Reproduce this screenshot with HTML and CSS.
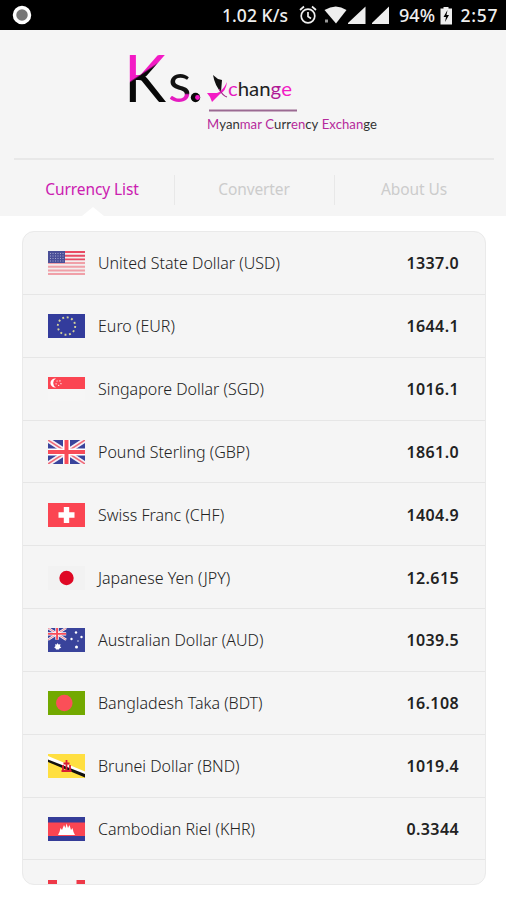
FILE: index.html
```html
<!DOCTYPE html>
<html>
<head>
<meta charset="utf-8">
<title>Ks. Xchange</title>
<meta name="viewport" content="width=device-width, initial-scale=1">
<link rel="stylesheet" href="styles.css">
</head>
<body>
  <div class="statusbar">
    <svg class="record" width="20" height="20" viewBox="0 0 20 20"><circle cx="10" cy="10" r="7.5" fill="#777" stroke="#fff" stroke-width="3.5"/></svg>
    <svg class="status" width="280" height="30" viewBox="0 0 280 30" fill="#eee">
      <text x="-4" y="22" textLength="66">1.02 K/s</text>
      <g fill="none" stroke="#eee" stroke-width="1.7">
        <circle cx="82" cy="16" r="6.8"/>
        <path d="M82 12v4.5l3 2M74 10l4-3.5M90 10l-4-3.5"/>
      </g>
      <path d="M98.500 10q11.500-7 22 0L110 23.500z"/>
      <path d="M99 19.500h3v3h-3z" fill="#999"/>
      <path d="M122 24V23L139.500 6.500V24z"/>
      <path d="M146 24V23L163 6.500V24z"/>
      <text x="173" y="22" textLength="36" lengthAdjust="spacingAndGlyphs">94%</text>
      <path d="M214.500 8.500h3v-1.500h5v1.500h3.500v16h-11.500z"/>
      <path d="M221.500 10l-4 7h2.500l-1 5 4-7h-2.500z" fill="#000"/>
      <text x="234.500" y="22" textLength="37">2:57</text>
    </svg>
  </div>

  <header class="header">
    <svg class="logo" width="290" height="128" viewBox="0 0 290 128">
      <defs>
        <linearGradient id="k" gradientUnits="userSpaceOnUse" x1="14" y1="34" x2="34" y2="64">
          <stop offset=".48" stop-color="#f31bc5"/>
          <stop offset=".53" stop-color="#080808"/>
        </linearGradient>
        <linearGradient id="s" gradientUnits="userSpaceOnUse" x1="58" y1="40" x2="58" y2="80">
          <stop offset=".58" stop-color="#111"/>
          <stop offset=".62" stop-color="#e51bc0"/>
        </linearGradient>
      </defs>
      <text class="big" x="14" y="72" font-size="65" fill="url(#k)" textLength="42" lengthAdjust="spacingAndGlyphs">K</text>
      <text class="big" x="58" y="72" font-size="54" fill="url(#s)">s</text>
      <circle cx="85.500" cy="67.500" r="4.700" fill="#080808"/>
      <circle cx="87.500" cy="67.500" r="2.400" fill="#f31bc5"/>
      <path d="M103 45l5 4 4 1-1 12q-6-6-8-17z" fill="#111"/>
      <path d="M97 63l10 0q6-2 10-11-1 9-7 12l-8 8-2-5z" fill="#f31bc5"/>
      <path d="M109 59q4 7 8 8" fill="none" stroke="#a02888" stroke-width="1.200"/>
      <text class="word" x="118" y="66" font-size="20" textLength="64" lengthAdjust="spacingAndGlyphs"><tspan fill="#e51bc0">c</tspan><tspan fill="#222">han</tspan><tspan fill="#b01895">g</tspan><tspan fill="#f31bc5">e</tspan></text>
      <path d="M99 80.500h88" stroke="#9b6a92" stroke-width="2"/>
      <text class="word" x="97" y="99" font-size="14" textLength="170" lengthAdjust="spacingAndGlyphs"><tspan fill="#b52a9b">M</tspan><tspan fill="#333">yan</tspan><tspan fill="#b52a9b">mar C</tspan><tspan fill="#333">urr</tspan><tspan fill="#b52a9b">en</tspan><tspan fill="#333">cy </tspan><tspan fill="#b52a9b">Exchan</tspan><tspan fill="#333">ge</tspan></text>
    </svg>
    <nav class="tabs">
      <div class="tab active">Currency List</div>
      <div class="tab">Converter</div>
      <div class="tab">About Us</div>
    </nav>
  </header>

  <div class="list">
    <div class="row">
      <svg class="flag" viewBox="0 0 37 24">
        <path fill="#f3eeee" d="M0 0h37v24H0z"/>
        <path d="M0 1h37M0 4.700h37M0 8.400h37" stroke="#e84a63" stroke-width="1.850"/>
        <path d="M0 12.100h37M0 15.800h37M0 19.500h37M0 23.100h37" stroke="#f0a0a8" stroke-width="2"/>
        <path fill="#4a4f98" d="M0 0h17v12H0z"/>
        <path d="M2 2.500h14M2 5h14M2 7.500h14M2 10h14" stroke="#a5a8d0" stroke-dasharray="1 1.500"/>
      </svg>
      <span class="name">United State Dollar (USD)</span><span class="rate">1337.0</span>
    </div>
    <div class="row">
      <svg class="flag" viewBox="0 0 37 24">
        <path fill="#333c9c" d="M0 0h37v24H0z"/>
        <circle cx="18.500" cy="12" r="8.700" fill="none" stroke="#d5d39a" stroke-width="1.900" stroke-dasharray="1.900 2.655"/>
      </svg>
      <span class="name">Euro (EUR)</span><span class="rate">1644.1</span>
    </div>
    <div class="row">
      <svg class="flag" viewBox="0 0 37 24">
        <path fill="#f6f6f6" d="M0 12h37v12H0z"/>
        <path fill="#fb4552" d="M0 0h37v12H0z"/>
        <path d="M8 1.500a4.600 4.600 0 1 0 0 9 5 5 0 0 1 0-9z" fill="#fff"/>
        <circle cx="10.500" cy="6" r="2.500" fill="none" stroke="#fdd" stroke-width="1.200" stroke-dasharray="1.200 1.900"/>
      </svg>
      <span class="name">Singapore Dollar (SGD)</span><span class="rate">1016.1</span>
    </div>
    <div class="row">
      <svg class="flag" viewBox="0 0 37 24">
        <g id="jack">
          <path fill="#39439b" d="M0 0h37v24H0z"/>
          <path d="M0 0l37 24M37 0L0 24" stroke="#f5eff5" stroke-width="5"/>
          <path d="M0 0l37 24M37 0L0 24" stroke="#ef6b78" stroke-width="1.500"/>
          <path d="M18.500 0v24M0 12h37" stroke="#fff" stroke-width="7"/>
          <path d="M18.500 0v24M0 12h37" stroke="#f84b58" stroke-width="4"/>
        </g>
      </svg>
      <span class="name">Pound Sterling (GBP)</span><span class="rate">1861.0</span>
    </div>
    <div class="row">
      <svg class="flag" viewBox="0 0 37 24">
        <path fill="#fb4552" d="M0 0h37v24H0z"/>
        <path d="M18.500 4v16M10.500 12h16" stroke="#fff" stroke-width="5.400"/>
      </svg>
      <span class="name">Swiss Franc (CHF)</span><span class="rate">1404.9</span>
    </div>
    <div class="row">
      <svg class="flag" viewBox="0 0 37 24">
        <path fill="#f2f2f2" d="M0 0h37v24H0z"/>
        <circle cx="18.500" cy="12" r="7.200" fill="#df0824"/>
      </svg>
      <span class="name">Japanese Yen (JPY)</span><span class="rate">12.615</span>
    </div>
    <div class="row">
      <svg class="flag" viewBox="0 0 37 24">
        <path fill="#39439b" d="M0 0h37v24H0z"/>
        <use href="#jack" transform="scale(.49)"/>
        <g fill="#fff">
          <path d="M9.500 15l1 1.500 2-.3-.5 2 1.300 1.500-2 .7-.3 1.100H8l-.3-1.100-1.500-.8L7.500 18l-.5-1.700 1.700.2z"/>
          <circle cx="28" cy="4.500" r="1.200"/><circle cx="23.500" cy="11" r="1.200"/><circle cx="33.500" cy="9" r="1.200"/><circle cx="28.500" cy="19" r="1.500"/><circle cx="30" cy="13" r=".7"/>
        </g>
      </svg>
      <span class="name">Australian Dollar (AUD)</span><span class="rate">1039.5</span>
    </div>
    <div class="row">
      <svg class="flag" viewBox="0 0 37 24">
        <path fill="#72a900" d="M0 0h37v24H0z"/>
        <circle cx="16.300" cy="12" r="8.300" fill="#fb4f58"/>
      </svg>
      <span class="name">Bangladesh Taka (BDT)</span><span class="rate">16.108</span>
    </div>
    <div class="row">
      <svg class="flag" viewBox="0 0 37 24">
        <path fill="#ffdf40" d="M0 0h37v24H0z"/>
        <path fill="#fff" d="M0 2l37 15.500v4L0 7z"/>
        <path fill="#111" d="M0 5.500l37 14.500v3.500L0 8z"/>
        <path d="M18.500 6v11M15.500 9.500h6M13.500 17h10M15 11v6M22 11v6" stroke="#d91e35" stroke-width="1.800" fill="none"/>
      </svg>
      <span class="name">Brunei Dollar (BND)</span><span class="rate">1019.4</span>
    </div>
    <div class="row">
      <svg class="flag" viewBox="0 0 37 24">
        <path fill="#343c98" d="M0 0h37v24H0z"/>
        <path fill="#fb4552" d="M0 5.500h37v13.500H0z"/>
        <path d="M10 18l1.500-3 1-4 1.500 2 2-5 1.500 3 1-4.500 1.500 4.500 1.500-3 1.500 5 1.500-2 1 4 1.500 3z" fill="#fff"/>
      </svg>
      <span class="name">Cambodian Riel (KHR)</span><span class="rate">0.3344</span>
    </div>
    <div class="row">
      <svg class="flag" viewBox="0 0 37 24">
        <path fill="#f5f5f5" d="M0 0h37v24H0z"/>
        <path fill="#ee3948" d="M0 0h9v24H0zM28.500 0H37v24h-8.500z"/>
      </svg>
    </div>
  </div>
</body>
</html>
```
FILE: styles.css
```css
* {box-sizing: border-box;}
body {
  margin: 0;
  height: 900px;
  overflow: hidden;
  background: #fff;
  font-family: "Noto Sans", "Open Sans", sans-serif;
}
svg {display: block;}
.statusbar {
  display: flex;
  justify-content: space-between;
  height: 30px;
  padding-left: 12px;
  background: #000;
}
.record {margin-top: 5px;}
.status {
  font-size: 17.5px;
  font-weight: 500;
  overflow: visible;
}
.header {
  height: 186px;
  padding: 0 12px 0 14px;
  background: #f5f5f5;
}
.logo {
  height: 128px;
  margin-left: 96px;
}
.big, .word {font-family: Lato, sans-serif;}
.word {font-kerning: none;}
.tabs {
  display: flex;
  height: 58px;
  border-top: 2px solid #e8e8e8;
}
.tab {
  position: relative;
  flex: 1;
  padding-top: 18px;
  line-height: 22px;
  font-size: 15.5px;
  letter-spacing: -.1px;
  color: #ccc;
  text-align: center;
}
.tab.active {
  text-indent: -4px;
  color: #cb20b0;
}
/* separator between tabs */
.tab + .tab::before {
  content: "";
  position: absolute;
  left: 0;
  top: 15px;
  height: 30px;
  border-left: 1px solid #e8e8e8;
}
/* notch under the open tab */
.tab.active::after {
  content: "";
  position: absolute;
  left: 68px;
  bottom: 0;
  border: 11px solid transparent;
  border-top: 0;
  border-bottom: 9px solid #fff;
}
.list {
  width: 464px;
  height: 654px;
  margin: 15px 0 0 22px;
  border: 1px solid #eaeaea;
  border-radius: 12px;
  background: #f5f5f5;
  overflow: hidden;
}
.row {
  display: flex;
  align-items: center;
  height: 62.850px;
  padding: 0 26px 0 25px;
  border-bottom: 1px solid #e6e6e6;
}
.flag {
  width: 37px;
  height: 24px;
  margin: 1px 13px 0 0;
}
.name, .rate {
  padding-top: 1px;
  font-size: 16px;
  color: #222;
}
.name {
  flex: 1;
  font-weight: 300;
}
.rate {
  font-weight: 600;
  letter-spacing: .4px;
}
```
